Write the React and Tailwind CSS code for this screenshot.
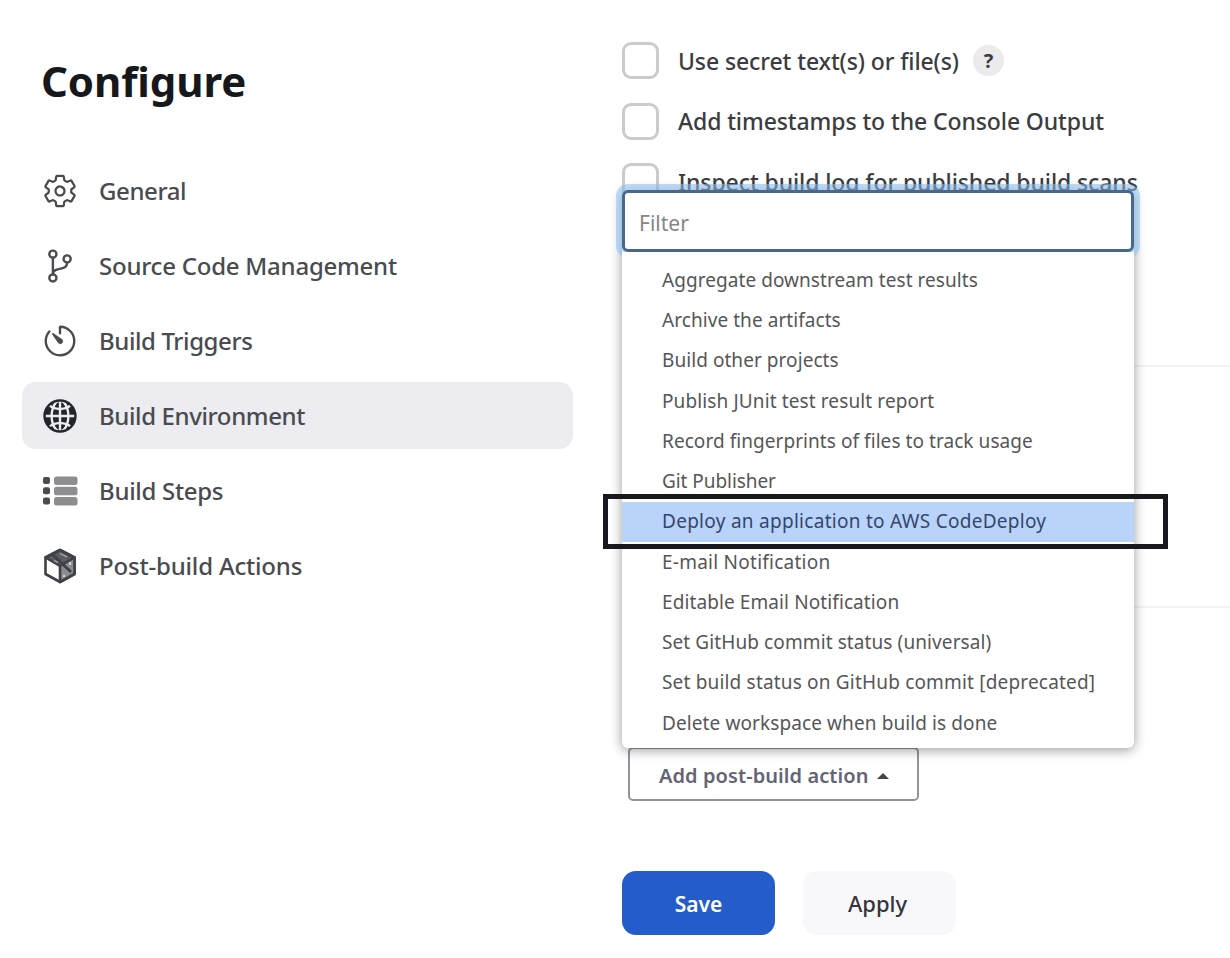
import { IoSettingsOutline, IoGitBranchOutline, IoTimerOutline, IoGlobe } from "react-icons/io5";

function StepsIcon() {
  return (
    <svg viewBox="0 0 36 32" className="h-8 w-9">
      {[1.5, 11.75, 22].map((y) => (
        <g key={y}>
          <rect x="1" y={y + 0.5} width="7" height="7" rx="2" fill="#4b4b4f" />
          <rect x="12" y={y} width="23.5" height="8.5" rx="2.5" fill="#8e8e90" />
        </g>
      ))}
    </svg>
  );
}

function PackageIcon() {
  return (
    <svg viewBox="0 0 36 36" className="size-9" fill="none" stroke="#3f4146" strokeWidth="2.6" strokeLinejoin="round">
      <path d="M18 2 32.500 9.500V26L18 34 3.500 26V9.500Z" />
      <path d="M3.500 9.500 18 2 32.500 9.500 18 18Z" fill="#5a5c61" />
      <path d="M18 18 32.500 9.500V26L18 34Z" fill="#8b8c90" />
      <path d="M11 7 29 24" strokeWidth="3" />
      <path d="M18 5.500 25 9M12 12.500 16 14.500" stroke="#98999d" strokeWidth="1.800" />
      <path d="M22 27V29M28 14V17" stroke="#d4d4d7" strokeWidth="2" />
    </svg>
  );
}

const navItems = [
  { label: "General", tracking: "tracking-[-0.4px]", icon: <IoSettingsOutline className="size-9 stroke-[14]" /> },
  { label: "Source Code Management", tracking: "tracking-[-0.24px]", icon: <IoGitBranchOutline className="size-[38px] stroke-[10]" /> },
  { label: "Build Triggers", tracking: "tracking-[-0.4px]", icon: <IoTimerOutline className="size-[38px] stroke-[10]" /> },
  { label: "Build Environment", tracking: "tracking-[-0.38px]", icon: <IoGlobe className="size-[38px] text-[#22252c]" />, active: true },
  { label: "Build Steps", tracking: "tracking-[-0.3px]", icon: <StepsIcon /> },
  { label: "Post-build Actions", tracking: "tracking-[-0.18px]", icon: <PackageIcon /> },
];

const options = [
  { label: "Use secret text(s) or file(s)", help: true },
  { label: "Add timestamps to the Console Output" },
  { label: "Inspect build log for published build scans" },
];

const actions = [
  ["Aggregate downstream test results", "tracking-[0.06px]"],
  ["Archive the artifacts", "tracking-[0.06px]"],
  ["Build other projects", "tracking-[0.06px]"],
  ["Publish JUnit test result report", "tracking-[0.12px]"],
  ["Record fingerprints of files to track usage", "tracking-[0.06px]"],
  ["Git Publisher", "tracking-[-0.06px]"],
  ["Deploy an application to AWS CodeDeploy", "tracking-[0.28px]"],
  ["E-mail Notification", "tracking-[0.25px]"],
  ["Editable Email Notification", "tracking-[0.1px]"],
  ["Set GitHub commit status (universal)", "tracking-[0.1px]"],
  ["Set build status on GitHub commit [deprecated]", "tracking-[0.18px]"],
  ["Delete workspace when build is done", "tracking-[0.1px]"],
];
const selected = "Deploy an application to AWS CodeDeploy";

function Sidebar() {
  return (
    <aside className="w-[573px] shrink-0 pl-[22px] pt-[53px]">
      <h1 className="pl-[19px] text-[42px] leading-[56px] font-bold tracking-[-0.1px] text-[#17181c]">Configure</h1>
      <nav className="mt-12 flex flex-col gap-2">
        {navItems.map((item) => (
          <a
            key={item.label}
            className={`flex h-[67px] items-center gap-5 rounded-[14px] pl-[19px] text-2xl font-medium whitespace-nowrap text-[#4a4b4f] ${item.tracking} ${item.active ? "bg-[#ececf1]" : ""}`}
          >
            <span className="flex w-[38px] shrink-0 items-center justify-center">{item.icon}</span>
            <span className="pt-px">{item.label}</span>
          </a>
        ))}
      </nav>
    </aside>
  );
}

function ActionMenu() {
  return (
    <div className="absolute top-[190px] left-0 h-[558px] w-[512px] rounded-md bg-white shadow-[0_2px_12px_rgba(0,0,0,0.4)]">
      <input
        placeholder="Filter"
        className="block h-[62px] w-full rounded-md border-[3px] border-[#49688d] bg-white px-[14px] pt-[3px] text-[21px] outline-none ring-[6px] ring-[#8cc0ee]/55 placeholder:text-[#85858a]"
      />
      <ul className="relative rounded-b-md bg-white pt-2">
        {actions.map(([label, tracking]) => (
          <li
            key={label}
            className={`flex h-[40.250px] items-center pl-[40px] text-[19px] whitespace-nowrap ${tracking} ${label === selected ? "relative bg-[#b9d3fb] text-[#34466b]" : "text-[#565658]"}`}
          >
            {label}
            {label === selected && (
              <span className="absolute -top-[8px] -left-[19px] h-[55px] w-[565px] border-[5px] border-[#17191d]" />
            )}
          </li>
        ))}
      </ul>
    </div>
  );
}

export default function App() {
  return (
    <div className="flex h-[958px] w-[1230px] overflow-hidden bg-white font-['Noto_Sans','Open_Sans',sans-serif]">
      <Sidebar />
      <main className="relative ml-[49px] flex flex-1 flex-col">
        <section className="flex h-[367px] flex-col gap-[23.500px] border-b-2 border-[#f3f3f5] pt-[42px]">
          {options.map((o) => (
            <label key={o.label} className="flex h-[37px] shrink-0 items-center text-[23px] font-medium tracking-[-0.1px] whitespace-nowrap text-[#3c3c40]">
              <span className="size-[37px] shrink-0 rounded-[9px] border-[3px] border-[#cbcbcf] bg-white" />
              <span className="ml-[19px] pt-px">{o.label}</span>
              {o.help && (
                <span className="ml-[14px] flex size-[31px] items-center justify-center rounded-full bg-[#ebebed] text-[20px] font-bold">?</span>
              )}
            </label>
          ))}
        </section>
        <section className="h-[241px] border-b-2 border-[#f3f3f5]" />
        <section className="flex flex-col items-start pt-[139px]">
          <button className="ml-[6px] flex h-[54px] w-[291px] items-center rounded-[5px] border-2 border-[#9393a0] pt-[3px] pl-[29px] text-[20px] font-semibold tracking-[0.08px] whitespace-nowrap text-[#646474]">
            Add post-build action
            <svg viewBox="0 0 12 6" className="ml-2 h-1.5 w-3" fill="#44444e">
              <path d="M6 0 12 6H0Z" />
            </svg>
          </button>
          <div className="mt-[70px] flex gap-7">
            <button className="h-[64px] w-[153px] rounded-[14px] bg-[#245dc9] pt-[3px] text-[21px] font-semibold text-white">Save</button>
            <button className="h-[64px] w-[153px] rounded-[14px] bg-[#f8f8fa] pt-px pr-1 text-[22px] font-medium text-[#35353a]">Apply</button>
          </div>
        </section>
        <ActionMenu />
      </main>
    </div>
  );
}
